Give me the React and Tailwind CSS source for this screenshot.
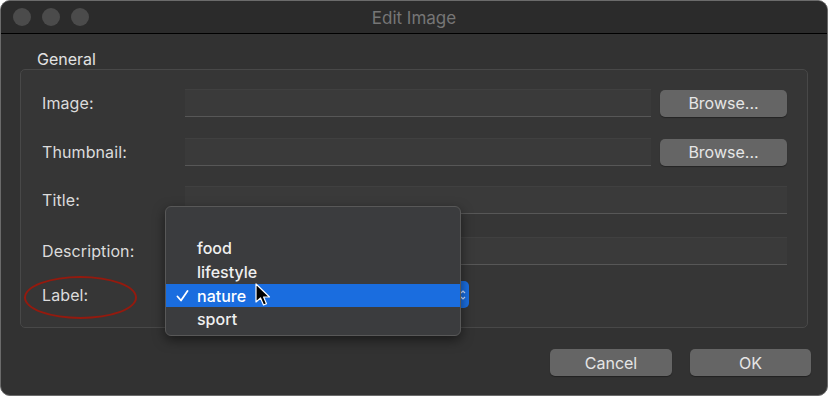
import React from 'react';

const font = { fontFamily: 'Inter, "Noto Sans", sans-serif' };

const Field = ({ className = '' }) => (
    <div className={`h-[28px] bg-[#3a3a3a] border-t border-[#404040] border-b border-b-[#575757] ${className}`} />
);

const MacButton = ({ children, className = '' }) => (
    <button className={`h-[27px] rounded-[5px] bg-[#656565] text-[16px] text-[#e6e6e6] shadow-[0_1px_1px_rgba(0,0,0,0.35)] ${className}`}>
        {children}
    </button>
);

const Row = ({ label, children, className = '' }) => (
    <div className={`flex items-center ${className}`}>
        <div className="w-[143px] shrink-0 text-[16px] tracking-[0.1px] text-[#dcdcdc]">{label}</div>
        <div className="flex-1 flex items-center gap-[9px]">{children}</div>
    </div>
);

const Cursor = () => (
    <svg width="18" height="24" viewBox="0 0 18 24" className="absolute left-[253px] top-[282px]">
        <path d="M2 1 L2 19 L6.5 15 L9.5 22 L12.5 20.7 L9.6 14 L15.5 14 Z" fill="#000" stroke="#fff" strokeWidth="1.2" strokeLinejoin="round" />
    </svg>
);

export default function App() {
    return (
        <div className="w-[828px] h-[396px] bg-white" style={font}>
            <div className="relative h-full rounded-[10px] border border-[#6b6b6b] bg-[#323232] overflow-hidden flex flex-col">
                {/* Title bar */}
                <div className="relative h-[33px] shrink-0 bg-[#2b2b2b] border-b border-black flex items-center">
                    <div className="flex items-center gap-[11px] pl-[12px]">
                        <span className="w-[18px] h-[18px] rounded-full bg-[#4b4b4b]" />
                        <span className="w-[18px] h-[18px] rounded-full bg-[#4b4b4b]" />
                        <span className="w-[18px] h-[18px] rounded-full bg-[#4b4b4b]" />
                    </div>
                    <div className="absolute inset-0 pt-[3px] flex items-center justify-center text-[17px] text-[#767676]">
                        Edit Image
                    </div>
                </div>

                {/* Body */}
                <div className="flex-1 flex flex-col pt-[16px] px-[19px]">
                    <div className="ml-[17px] text-[16px] leading-[18px] text-[#e2e2e2]">General</div>
                    <div className="mt-[1px] rounded-[5px] border border-[#484848] bg-[#363636] pl-[21px] pr-[20px] pt-[19px] pb-[19px] flex flex-col">
                        <Row label="Image:">
                            <Field className="flex-1" />
                            <MacButton className="w-[127px]">Browse...</MacButton>
                        </Row>
                        <Row label="Thumbnail:" className="mt-[21px]">
                            <Field className="flex-1" />
                            <MacButton className="w-[127px]">Browse...</MacButton>
                        </Row>
                        <Row label="Title:" className="mt-[20px]">
                            <Field className="flex-1" />
                        </Row>
                        <Row label="Description:" className="mt-[23px]">
                            <Field className="flex-1" />
                        </Row>
                        <Row label="Label:" className="mt-[16px]">
                            <div className="w-[284px] h-[27px] rounded-[5px] bg-[#1a6ddf] flex items-center justify-end pr-[3px]">
                                <svg width="6" height="12" viewBox="0 0 6 12">
                                    <path d="M1 4 L3 2 L5 4 M1 8 L3 10 L5 8" stroke="#cfe0ff" strokeWidth="1.2" fill="none" />
                                </svg>
                            </div>
                        </Row>
                    </div>

                    <div className="mt-[21px] flex justify-end gap-[18px] mr-[-3px]">
                        <MacButton className="w-[122px]">Cancel</MacButton>
                        <MacButton className="w-[121px]">OK</MacButton>
                    </div>
                </div>

                {/* Red annotation ellipse */}
                <div className="absolute left-[23px] top-[275px] w-[113px] h-[43px] rounded-[50%] border-2 border-[#941a0e]" />

                {/* Popup menu */}
                <div className="absolute left-[164px] top-[205px] w-[296px] h-[130px] rounded-[6px] border border-[#585858] bg-[#3b3c3e] shadow-[0_4px_12px_rgba(0,0,0,0.5)] pt-[29px] text-[16px] font-medium text-[#f0f0f0]">
                    <div className="h-[24px] flex items-center pl-[31px]">food</div>
                    <div className="h-[24px] flex items-center pl-[31px]">lifestyle</div>
                    <div className="relative h-[23px] flex items-center pl-[31px] bg-[#1a6ddf] text-white">
                        <svg width="13" height="12" viewBox="0 0 13 12" className="absolute left-[10px] top-[6px]">
                            <path d="M1.5 6.5 L5 10.5 L11.5 1" stroke="#fff" strokeWidth="1.8" fill="none" strokeLinecap="round" strokeLinejoin="round" />
                        </svg>
                        nature
                    </div>
                    <div className="h-[24px] flex items-center pl-[31px]">sport</div>
                </div>

                <Cursor />
            </div>
        </div>
    );
}
